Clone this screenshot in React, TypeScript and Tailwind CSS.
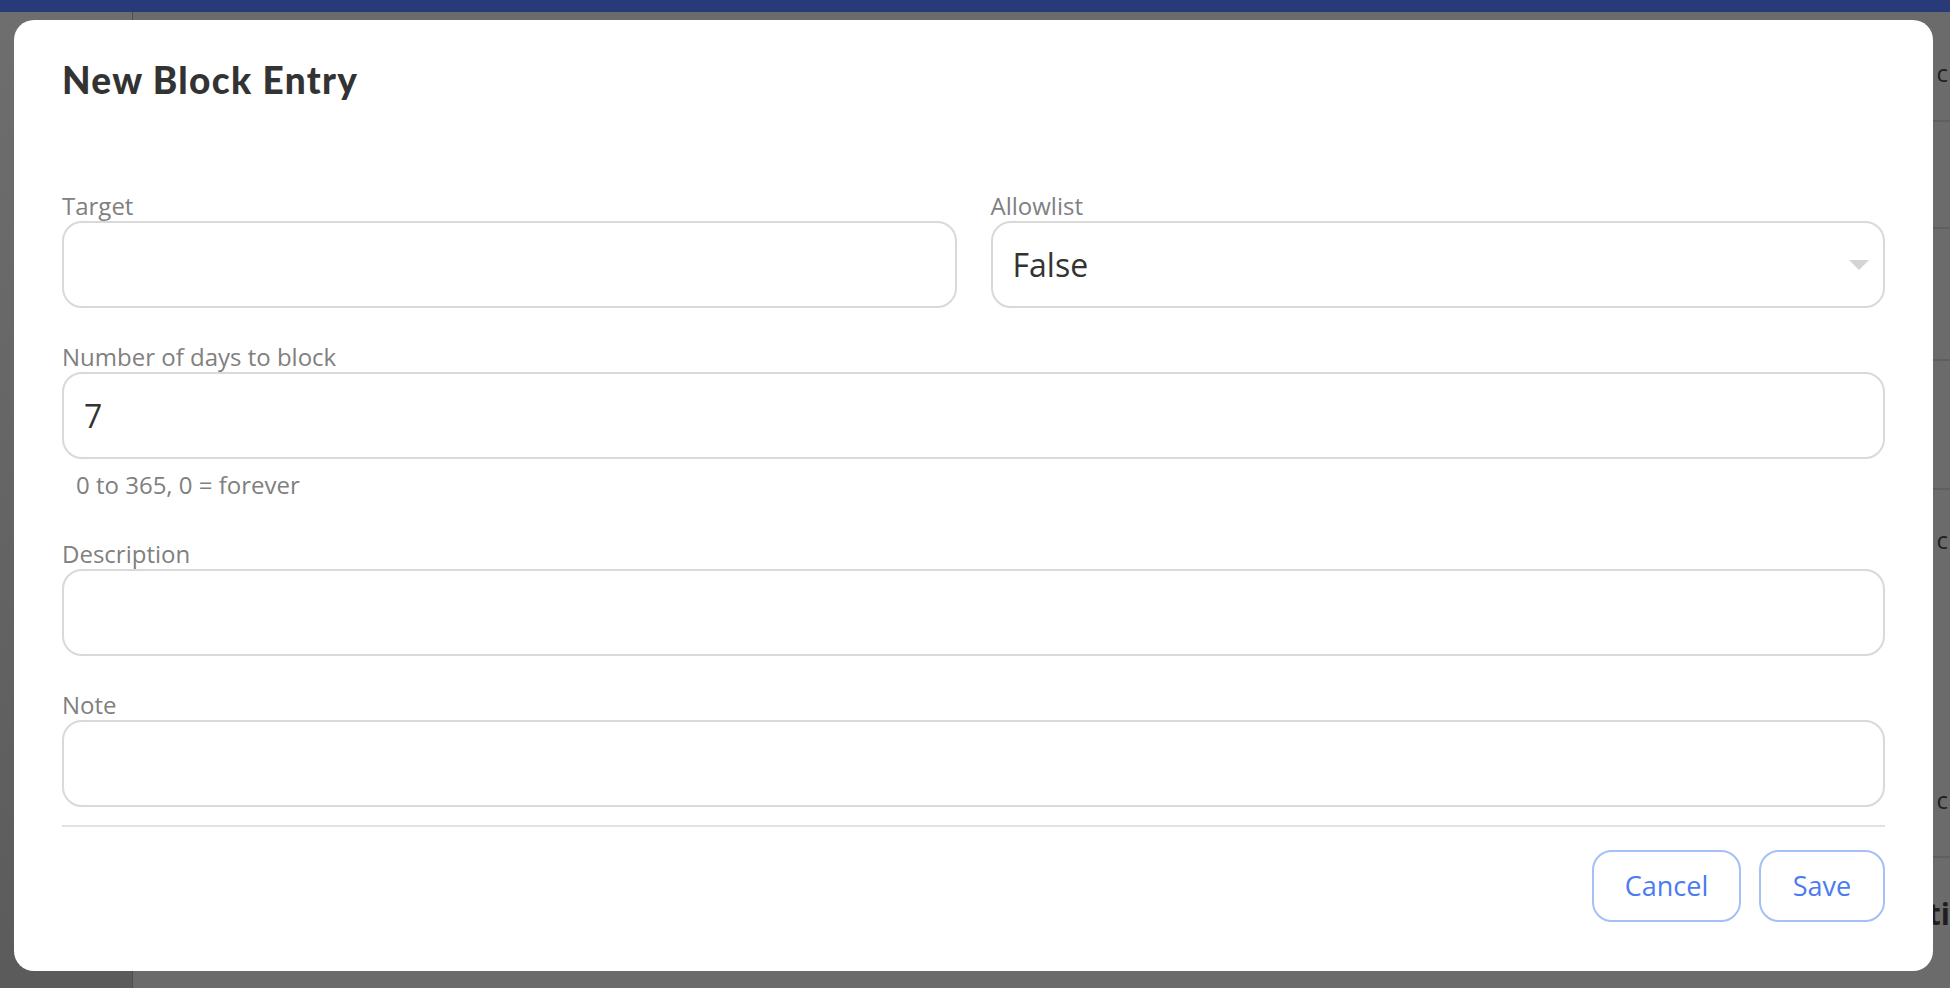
import { ReactNode } from "react";

const sans = { fontFamily: '"Open Sans", "Noto Sans", sans-serif' };

type FieldProps = {
  label: string;
  children: ReactNode;
};

const Field = ({ label, children }: FieldProps) => (
  <div className="flex flex-col">
    <div className="h-[30px] leading-[30px] text-[24px] text-[#808080]">{label}</div>
    {children}
  </div>
);

const TextBox = ({ value = "" }: { value?: string }) => (
  <div className="h-[87px] rounded-[20px] border-2 border-[#d9d9d9] flex items-center px-[20px] text-[32px] text-[#333]">
    {value}
  </div>
);

const SelectBox = ({ value }: { value: string }) => (
  <div className="h-[87px] rounded-[20px] border-2 border-[#d9d9d9] flex items-center justify-between pl-[20px] pr-[14px] text-[32px] text-[#333]">
    <span>{value}</span>
    <span className="w-0 h-0 border-l-[10px] border-r-[10px] border-t-[10px] border-l-transparent border-r-transparent border-t-[#d4d4d4]" />
  </div>
);

const Backdrop = () => (
  <div className="flex flex-col h-full">
    <div className="h-[12px] bg-[#283b78]" />
    <div className="flex flex-1">
      <div className="w-[133px] border-r border-[#4e4e4e] bg-gradient-to-b from-[#6e6e6e] to-[#5b5b5b]" />
      <div className="flex-1 flex flex-col bg-[#6b6b6b] text-[24px] text-[#1e1e1e]" style={sans}>
        <div className="h-[110px] border-b-2 border-[#5f5f5f] flex items-start justify-end pr-[2px] pt-[43px]">2 c</div>
        <div className="h-[107px] border-b-2 border-[#5f5f5f]" />
        <div className="h-[132px] border-b-2 border-[#5f5f5f]" />
        <div className="h-[129px] border-b-2 border-[#5f5f5f]" />
        <div className="h-[368px] border-b-2 border-[#5f5f5f] flex flex-col justify-between items-end pr-[2px] pt-[32px] pb-[38px]">
          <span>t c</span>
          <span>0 c</span>
        </div>
        <div className="flex-1 flex items-center justify-end font-bold text-[30px]">
          <span className="-mt-[20px]">ti</span>
        </div>
      </div>
    </div>
  </div>
);

const App = () => {
  return (
    <div className="relative w-full h-[988px] overflow-hidden bg-[#555]">
      <Backdrop />
      <div
        className="absolute top-[20px] left-[14px] right-[17px] bg-white rounded-[20px] px-[48px] pt-[40px] pb-[49px]"
        style={sans}
      >
        <h2
          className="h-[40px] leading-[40px] text-[37px] font-black tracking-[1.3px] text-[#333]"
          style={{ fontFamily: 'Lato, "Noto Sans", sans-serif' }}
        >
          New Block Entry
        </h2>

        <div className="mt-[91px] grid grid-cols-2 gap-x-[34px]">
          <Field label="Target">
            <TextBox />
          </Field>
          <Field label="Allowlist">
            <SelectBox value="False" />
          </Field>
        </div>

        <div className="mt-[34px]">
          <Field label="Number of days to block">
            <TextBox value="7" />
          </Field>
          <div className="mt-[11px] pl-[14px] h-[30px] leading-[30px] text-[24px] text-[#808080]">
            0 to 365, 0 = forever
          </div>
        </div>

        <div className="mt-[39px]">
          <Field label="Description">
            <TextBox />
          </Field>
        </div>

        <div className="mt-[34px]">
          <Field label="Note">
            <TextBox />
          </Field>
        </div>

        <div className="mt-[18px] h-[2px] bg-[#e2e2e2]" />

        <div className="mt-[23px] flex justify-end gap-[18px]">
          <button className="w-[149px] h-[72px] rounded-[20px] border-2 border-[#a3c0f7] text-[27px] text-[#4a7bef]">
            Cancel
          </button>
          <button className="w-[126px] h-[72px] rounded-[20px] border-2 border-[#a3c0f7] text-[27px] text-[#4a7bef]">
            Save
          </button>
        </div>
      </div>
    </div>
  );
};

export default App;
